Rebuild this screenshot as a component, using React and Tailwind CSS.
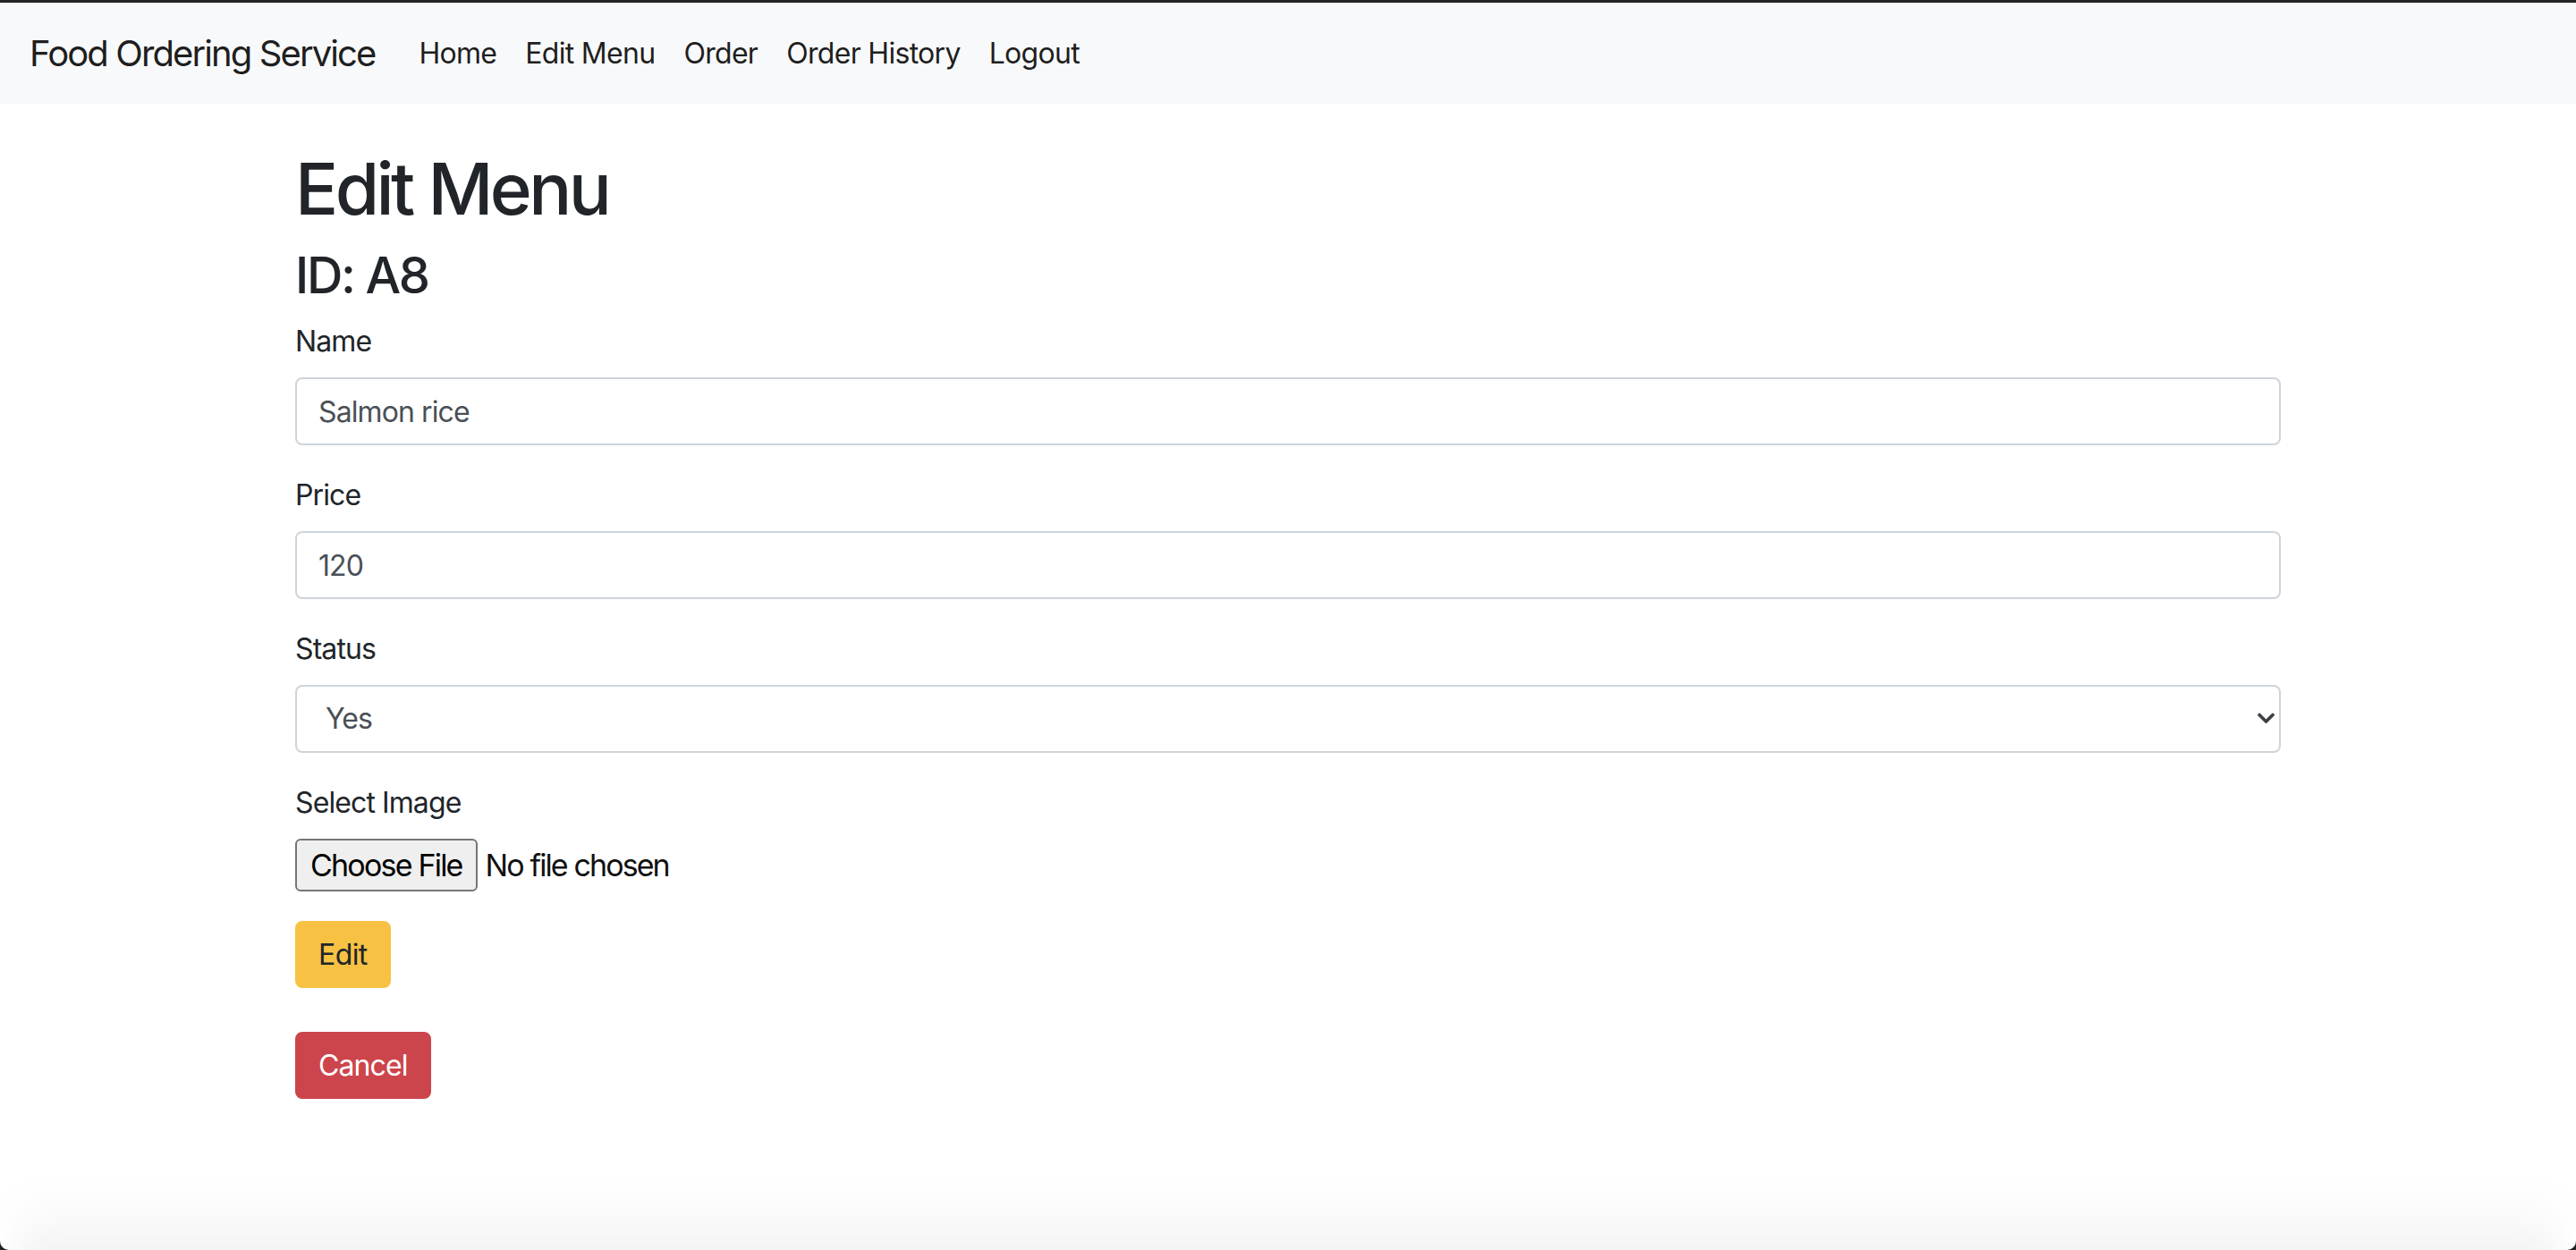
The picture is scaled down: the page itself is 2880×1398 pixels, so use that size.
import { useState } from 'react';

const font = { fontFamily: 'Inter, "Liberation Sans", sans-serif' };

const links = ['Home', 'Edit Menu', 'Order', 'Order History', 'Logout'];

// One labelled text field, Bootstrap-ish proportions at 2x.
function Field({ label, value, onChange }) {
  return (
    <div className="mb-[32px]">
      <label className="mb-[16px] block text-[32px] leading-[48px] tracking-[-0.9px] text-[#212529]">{label}</label>
      <input
        value={value}
        onChange={(e) => onChange(e.target.value)}
        className="block h-[76px] w-full rounded-[8px] border-2 border-[#ced4da] bg-white px-[24px] text-[32px] leading-[48px] tracking-[-0.9px] text-[#495057] outline-none"
      />
    </div>
  );
}

export default function App() {
  const [name, setName] = useState('Salmon rice');
  const [price, setPrice] = useState('120');
  const [status, setStatus] = useState('Yes');

  return (
    <div className="min-h-[1398px] bg-[#232323] pt-[3px]" style={font}>
      <div className="flex min-h-[1395px] flex-col overflow-hidden rounded-b-[10px] bg-white">
        <nav className="flex h-[113px] items-center bg-[#f8f9fa] px-[33px]">
          <span className="mr-[33px] text-[40px] leading-[60px] tracking-[-1.9px] text-black/90">
            Food Ordering Service
          </span>
          <ul className="flex items-center">
            {links.map((l) => (
              <li key={l} className="px-[16px] text-[32px] leading-[48px] tracking-[-0.7px] text-black/90">
                {l}
              </li>
            ))}
          </ul>
        </nav>

        <main className="mx-auto mt-[47px] w-[2220px]">
          <h1 className="mb-[16px] text-[80px] font-medium leading-[96px] tracking-[-3.6px] text-[#212529]">
            Edit Menu
          </h1>
          <h3 className="mb-[16px] text-[56px] font-medium leading-[67px] tracking-[-2.3px] text-[#212529]">
            ID: A8
          </h3>

          <Field label="Name" value={name} onChange={setName} />
          <Field label="Price" value={price} onChange={setPrice} />

          <div className="mb-[32px]">
            <label className="mb-[16px] block text-[32px] leading-[48px] tracking-[-0.9px] text-[#212529]">Status</label>
            <div className="relative">
              <select
                value={status}
                onChange={(e) => setStatus(e.target.value)}
                className="block h-[76px] w-full appearance-none rounded-[8px] border-2 border-[#ced4da] bg-white px-[32px] text-[32px] leading-[48px] tracking-[-0.9px] text-[#495057] outline-none"
              >
                <option>Yes</option>
                <option>No</option>
              </select>
              <svg
                className="pointer-events-none absolute right-[7px] top-[31px]"
                width="19"
                height="13"
                viewBox="0 0 19 13"
              >
                <path d="M2 2.5 L9.5 10 L17 2.5" fill="none" stroke="#3c4043" strokeWidth="3.6" strokeLinecap="round" strokeLinejoin="round" />
              </svg>
            </div>
          </div>

          <div className="mb-[33px]">
            <label className="mb-[16px] block text-[32px] leading-[48px] tracking-[-0.9px] text-[#212529]">Select Image</label>
            <div className="flex items-center">
              <button
                type="button"
                className="h-[59px] rounded-[6px] border-2 border-[#767676] bg-[#efefef] px-[15px] text-[34px] leading-[55px] tracking-[-1.8px] text-black"
              >
                Choose File
              </button>
              <span className="ml-[9px] text-[34px] leading-[55px] tracking-[-1.9px] text-[#111]">No file chosen</span>
            </div>
          </div>

          <button
            type="button"
            className="block h-[75px] rounded-[8px] border-2 border-[#f7c244] bg-[#f7c244] px-[24px] text-[32px] leading-[48px] tracking-[-0.6px] text-[#212529]"
          >
            Edit
          </button>
          <button
            type="button"
            className="mt-[49px] block h-[75px] rounded-[8px] border-2 border-[#cd454c] bg-[#cd454c] px-[24px] text-[32px] leading-[48px] tracking-[-0.9px] text-white"
          >
            Cancel
          </button>
        </main>

        <div className="flex-1" />
        <div className="h-[85px] overflow-hidden px-[20px] pt-[10px]">
          <div className="h-[130px] rounded-[40px] bg-linear-to-b from-white via-[#f7f7f7] to-[#e6e6e6] blur-[18px]" />
        </div>
      </div>
    </div>
  );
}
